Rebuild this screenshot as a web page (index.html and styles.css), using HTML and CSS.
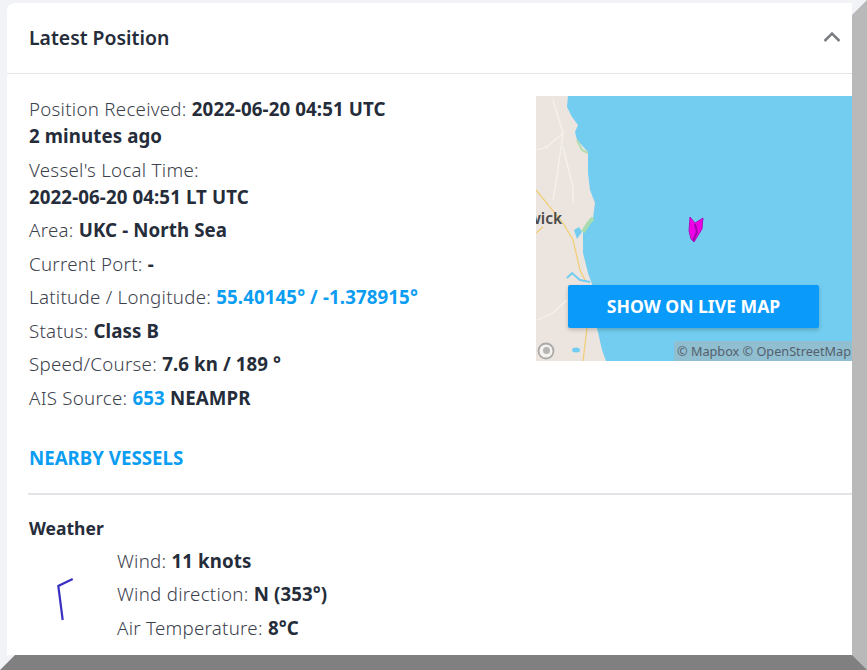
FILE: index.html
```html
<!DOCTYPE html>
<html lang="en">
<head>
    <meta charset="UTF-8">
    <meta name="viewport" content="width=device-width, initial-scale=1.0">
    <title>Latest Position</title>
    <link rel="stylesheet" href="styles.css">
</head>
<body>
    <div class="frame">
        <div class="card">
            <div class="card-header">
                <h2>Latest Position</h2>
                <svg class="chevron" width="18" height="12" viewBox="0 0 18 12">
                    <path d="M1.5 10 L9 2.5 L16.5 10" fill="none" stroke="#7b7f85" stroke-width="2.6"/>
                </svg>
            </div>
            <div class="card-body">
                <div class="top-row">
                    <div class="details">
                        <p class="line-wrap">Position Received: <b>2022-06-20 04:51 UTC</b><br><b>2 minutes ago</b></p>
                        <p class="line-wrap">Vessel's Local Time:<br><b>2022-06-20 04:51 LT UTC</b></p>
                        <p>Area: <b>UKC - North Sea</b></p>
                        <p>Current Port: <b>-</b></p>
                        <p>Latitude / Longitude: <b class="link">55.40145° / -1.378915°</b></p>
                        <p>Status: <b>Class B</b></p>
                        <p>Speed/Course: <b>7.6 kn / 189 °</b></p>
                        <p>AIS Source: <b class="link">653</b> <b>NEAMPR</b></p>
                    </div>
                    <div class="map">
                        <svg class="map-art" width="316" height="265" viewBox="0 0 316 265">
                            <rect width="316" height="265" fill="#ece5df"/>
                            <path d="M32 0 L31 11 L36 21 L42 29 L39 36 L41 44 L52 56 L52 77 L54 94 L59 107 L57 122 L47 136 L47 157 L52 177 L57 191 L61 232 L66 254 L70 265 L316 265 L316 0 Z" fill="#72cdf0"/>
                            <path d="M41 44 L46 54 L52 57" fill="none" stroke="#b5dcae" stroke-width="2"/>
                            <path d="M47 136 L52 128 L57 122" fill="none" stroke="#a8dcae" stroke-width="4"/>
                            <path d="M17 4 L27 37 L11 51 L1 54 M27 37 L21 81 L17 104 M27 51 L37 91 L37 107 M1 224 L17 217 L31 204" fill="none" stroke="#f6f2ee" stroke-width="1.2"/>
                            <path d="M0 94 L27 127 L37 144 L44 174 L49 184 M51 232 L47 265 M0 137 L7 131" fill="none" stroke="#f0cf78" stroke-width="1.3"/>
                            <path d="M31 182 L36 177 L44 184 L54 186" fill="none" stroke="#72cdf0" stroke-width="2"/>
                            <path d="M38 134 L43 131 L46 136 L41 143 Z" fill="#72cdf0"/>
                            <ellipse cx="40" cy="254" rx="4" ry="2.5" fill="#72cdf0"/>
                            <path d="M154 121 L159 127 L167 122 L166 133 L158 146 L155 143 L153 135 Z" fill="#ee00e6" stroke="#a818b8" stroke-width="1"/>
                            <path d="M159 128 L161 136 L157 145" fill="none" stroke="#a000b0" stroke-width="2"/>
                        </svg>
                        <span class="map-label">wick</span>
                        <a class="map-button">SHOW ON LIVE MAP</a>
                        <svg class="map-logo" width="20" height="20" viewBox="0 0 20 20">
                            <circle cx="10" cy="10" r="7.5" fill="#f4f1ee" stroke="#a9a9a9" stroke-width="1.8"/>
                            <circle cx="10.5" cy="9.5" r="3.5" fill="#b5b5b5"/>
                        </svg>
                        <span class="map-credit">© Mapbox © OpenStreetMap</span>
                    </div>
                </div>
                <a class="nearby">NEARBY VESSELS</a>
                <hr class="divider">
                <h3>Weather</h3>
                <div class="weather">
                    <svg class="wind" width="88" height="100" viewBox="0 0 88 100">
                        <path d="M33.7 64 L29.3 30 L43.7 23" fill="none" stroke="#3a30c0" stroke-width="2.2"/>
                    </svg>
                    <div class="weather-info">
                        <p>Wind: <b>11 knots</b></p>
                        <p>Wind direction: <b>N (353°)</b></p>
                        <p>Air Temperature: <b>8°C</b></p>
                    </div>
                </div>
            </div>
        </div>
    </div>
</body>
</html>
```

FILE: styles.css
```css
html, body {
    margin: 0;
    height: 100%;
    overflow: hidden;
}
body {
    font-family: 'Noto Sans', sans-serif;
    color: #2b3340;
}
.frame {
    box-sizing: border-box;
    height: 670px;
    border: 15px solid;
    border-color: #f1f3f6 #b9b9b9 #808080 #f1f3f6;
}
.card {
    margin: -12px 0 0 -8px;
    height: 652px;
    background: #fff;
    border-top-left-radius: 8px;
    overflow: hidden;
}
.card-header {
    display: flex;
    justify-content: space-between;
    align-items: center;
    height: 68px;
    padding: 0 11px 2px 22px;
    border-bottom: 1px solid #e3e5e8;
}
h2 {
    margin: 0;
    font-size: 19.4px;
    font-weight: 600;
    color: #252c3a;
}
.card-body {
    padding: 21px 0 0 22px;
}
.top-row {
    display: flex;
    justify-content: space-between;
}
p {
    margin: 0 0 7px;
    font-size: 18.7px;
    font-weight: 300;
    line-height: 26.6px;
    letter-spacing: 0.27px;
    color: #3c424c;
}
.line-wrap {
    line-height: 27px;
}
b {
    font-weight: 700;
    letter-spacing: 0.1px;
    color: #252c3a;
}
b.link {
    color: #0a9df2;
}
.map {
    position: relative;
    margin-top: 1px;
    width: 316px;
    height: 265px;
    overflow: hidden;
}
.map-art {
    display: block;
    filter: blur(0.4px);
}
.map-label {
    position: absolute;
    left: -8px;
    top: 111px;
    font-size: 15.5px;
    font-weight: 600;
    color: #4a4a4a;
}
.map-button {
    position: absolute;
    left: 32px;
    top: 189px;
    width: 251px;
    height: 43px;
    line-height: 43px;
    text-align: center;
    background: #0a9bfa;
    border-radius: 2px;
    box-shadow: 0 2px 4px rgba(0, 0, 0, 0.2);
    color: #fff;
    font-size: 17.6px;
    font-weight: 700;
}
.map-logo {
    position: absolute;
    left: 0;
    bottom: 0;
}
.map-credit {
    position: absolute;
    right: 0;
    bottom: 0;
    padding: 0 1px 0 3px;
    height: 20px;
    line-height: 20px;
    background: rgba(170, 180, 185, 0.55);
    color: #55606a;
    font-size: 12.7px;
}
.nearby {
    display: block;
    margin-top: 26px;
    font-size: 18.7px;
    font-weight: 700;
    line-height: 26px;
    color: #0a9df2;
}
.divider {
    margin: 22px 0 0 -1px;
    border: 0;
    border-top: 2px solid #e2e4e7;
}
h3 {
    margin: 21px 0 0;
    font-size: 17.5px;
    font-weight: 700;
    line-height: 24px;
    color: #252c3a;
}
.weather {
    display: flex;
    margin-top: 8px;
}
.wind {
    flex: none;
    margin-top: 8px;
}
.weather-info p {
    margin-bottom: 7px;
}
```
